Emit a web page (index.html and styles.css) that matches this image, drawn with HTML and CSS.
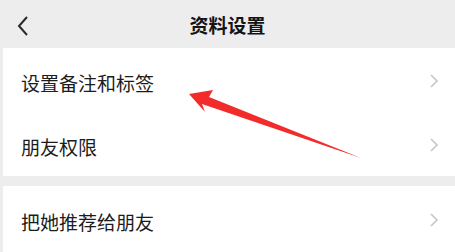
FILE: index.html
```html
<!DOCTYPE html>
<html lang="zh">
<head>
<meta charset="utf-8">
<link rel="stylesheet" href="styles.css">
</head>
<body>
<div class="page">
  <header class="topbar">
    <svg class="back" width="14" height="22" viewBox="0 0 14 22"><path d="M11 2 L3 11 L11 20" fill="none" stroke="#2a2a2a" stroke-width="2"/></svg>
    <h1 class="title">资料设置</h1>
  </header>
  <section class="group">
    <div class="row"><span class="label">设置备注和标签</span><svg class="chev" width="10" height="16" viewBox="0 0 10 16"><path d="M2 2 L8 8 L2 14" fill="none" stroke="#c6c6c6" stroke-width="1.6"/></svg></div>
    <div class="row"><span class="label">朋友权限</span><svg class="chev" width="10" height="16" viewBox="0 0 10 16"><path d="M2 2 L8 8 L2 14" fill="none" stroke="#c6c6c6" stroke-width="1.6"/></svg></div>
  </section>
  <section class="group">
    <div class="row tall"><span class="label">把她推荐给朋友</span><svg class="chev" width="10" height="16" viewBox="0 0 10 16"><path d="M2 2 L8 8 L2 14" fill="none" stroke="#c6c6c6" stroke-width="1.6"/></svg></div>
  </section>
  <svg class="arrow" width="455" height="252" viewBox="0 0 455 252"><polygon points="189,94 213,90 209,97 361,158 202,104 205,112" fill="#f22b2b"/></svg>
</div>
</body>
</html>
```

FILE: styles.css
```css
html, body {
  margin: 0;
  padding: 0;
  background: #ededed;
}
.page {
  position: relative;
  width: 455px;
  height: 252px;
  overflow: hidden;
  font-family: "Noto Sans CJK SC", "Noto Sans", sans-serif;
  display: flex;
  flex-direction: column;
  gap: 10px;
}
.topbar {
  position: relative;
  height: 52px;
  display: flex;
  align-items: center;
  justify-content: center;
  background: #ededed;
  margin-bottom: -10px;
}
.back {
  position: absolute;
  left: 16px;
  top: 15px;
}
.title {
  margin: 0;
  font-size: 19px;
  font-weight: 700;
  color: #141414;
  line-height: 1;
}
.group {
  margin-left: 3px;
  background: #ffffff;
  display: flex;
  flex-direction: column;
}
.row {
  height: 64px;
  display: flex;
  align-items: center;
  justify-content: space-between;
  padding: 0 16px 0 18px;
}
.row.tall {
  height: 66px;
}
.label {
  font-size: 19px;
  color: #1c1c1c;
  line-height: 1;
  padding-top: 4px;
}
.chev {
  display: block;
  margin-top: 2px;
}
.arrow {
  position: absolute;
  left: 0;
  top: 0;
  pointer-events: none;
}
```
